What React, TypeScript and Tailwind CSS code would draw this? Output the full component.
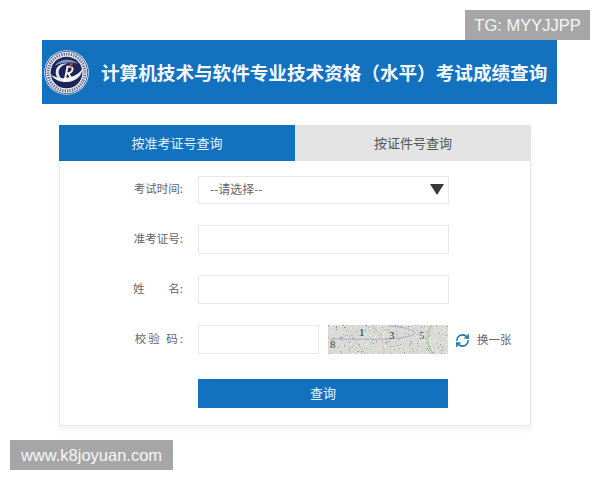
import { RefreshCw } from 'lucide-react';

const FONT = "font-['Noto_Sans_CJK_SC','Liberation_Sans',sans-serif]";

// speckle for the captcha background, fixed so every render is the same
const NOISE = Array.from({ length: 300 }, (_, i) => ({
  x: (i * 73 + (i * i) % 29) % 120,
  y: (i * 41 + (i * i) % 17) % 29,
  c: i % 4 === 0 ? '#8f948a' : i % 4 === 1 ? '#a9aca4' : '#f1f1ee',
}));

function Logo() {
  return (
    <svg width="45" height="45" viewBox="0 0 46 46" className="shrink-0">
      <circle cx="23" cy="23" r="22.8" fill="#eef0f6" />
      <circle cx="23" cy="23" r="21.6" fill="none" stroke="#2a3464" strokeWidth="0.8" />
      <circle cx="23" cy="23" r="18.8" fill="none" stroke="#5b6390" strokeWidth="3" strokeDasharray="1.3 1.2" />
      <circle cx="23" cy="23" r="16.2" fill="#1d2556" />
      <path d="M7 25c5 9 22 11 30 1 2-3 2-5 2-7-3 8-21 14-32 6z" fill="#f0f3fa" />
      <path d="M11 16c5-7 17-8 24-2-7-2-16-2-24 2z" fill="#7f92c4" />
      <path d="M24 14c-7-1-12 3-12 9 0 5 4 8 8 8-3-2-5-5-5-8 0-5 4-8 9-9z" fill="#e4e9f6" />
      <path d="M21 32l3-15M23 17h3q4 0 3 3.500t-6 3.500M25 24l4 7" fill="none" stroke="#ffffff" strokeWidth="1.9" />
      <path d="M26 12l1.500 2 2.500-.5-1.500 2.500.5 2-2.500-1z" fill="#d8353a" />
    </svg>
  );
}

function Captcha() {
  return (
    <div className="relative w-[120px] h-[29px] ml-[9px] bg-[#d6d6d0] overflow-hidden">
      <svg width="120" height="29" viewBox="0 0 120 29" className="absolute inset-0">
        <rect width="120" height="29" fill="#d9d9d5" />
        {NOISE.map((n, i) => (
          <rect key={i} x={n.x} y={n.y} width="1" height="1" fill={n.c} />
        ))}
        <path d="M2 14c30 0 60 2 80-3 12-3 0-9-22-10" fill="none" stroke="#9aa6d4" strokeWidth="0.8" />
        <path d="M24 8c4 10 9 16 14 21M44 0c8 8 12 18 12 29" fill="none" stroke="#d9b4aa" strokeWidth="0.8" />
        <path d="M104 0c-6 8-6 20 1 29" fill="none" stroke="#a8cc9a" strokeWidth="1.2" />
      </svg>
      <span className="absolute left-[2px] top-[12px] text-[11px] leading-[14px] font-['Liberation_Serif',serif] text-[#3d4a2c]">8</span>
      <span className="absolute left-[31px] top-[0px] text-[11px] leading-[14px] font-['Liberation_Serif',serif] text-[#14301f]">1</span>
      <span className="absolute left-[61px] top-[3px] text-[11px] leading-[14px] font-['Liberation_Serif',serif] text-[#2e3e38]">3</span>
      <span className="absolute left-[91px] top-[3px] text-[11px] leading-[14px] font-['Liberation_Serif',serif] text-[#40604a]">5</span>
    </div>
  );
}

function Row({ label, children }: { label: React.ReactNode; children: React.ReactNode }) {
  return (
    <div className="flex items-center h-[29px]">
      <div className="w-[138px] pr-[15px] pb-[2px] flex justify-end text-[11.5px] text-[#666]">{label}</div>
      {children}
    </div>
  );
}

export default function App() {
  return (
    <div className={`relative w-[600px] h-[480px] bg-white pt-[40px] overflow-hidden ${FONT}`}>
      {/* Banner */}
      <div className="ml-[42px] w-[515px] h-[64px] bg-[#1272bf] flex items-center pl-[2px]">
        <Logo />
        <h1 className="ml-[12px] text-[18.6px] font-bold text-[#f4f8fc] whitespace-nowrap">
          计算机技术与软件专业技术资格（水平）考试成绩查询
        </h1>
      </div>

      {/* Card */}
      <div className="ml-[59px] mt-[21px] w-[472px] h-[301px] bg-white border border-[#e6e6e6] shadow-[0_4px_6px_rgba(0,0,0,0.05)]">
        <div className="flex h-[36px] -mx-px -mt-px">
          <div className="w-[236px] bg-[#1272bf] text-[#e8f2fa] text-[13px] flex items-center justify-center">按准考证号查询</div>
          <div className="flex-1 bg-[#e3e3e3] text-[#555] text-[13px] flex items-center justify-center">按证件号查询</div>
        </div>

        <div className="flex flex-col gap-[21px] pt-[14px]">
          <Row label={<span>考试时间:</span>}>
            <div className="w-[251px] h-[28px] border border-[#e8e8e8] flex items-center justify-between pl-[11px] pr-[4px] text-[12px] text-[#666]">
              <span className="pb-[2px]">--请选择--</span>
              <span className="w-0 h-0 border-l-[7.5px] border-r-[7.5px] border-t-[11px] border-l-transparent border-r-transparent border-t-[#3a3a3a]" />
            </div>
          </Row>
          <Row label={<span>准考证号:</span>}>
            <div className="w-[251px] h-[29px] border border-[#e8e8e8]" />
          </Row>
          <Row label={<span className="w-[50px] flex justify-between"><span>姓</span><span>名:</span></span>}>
            <div className="w-[251px] h-[29px] border border-[#e8e8e8]" />
          </Row>
          <Row label={<span className="tracking-[2px] -mr-[2px]">校验 码:</span>}>
            <div className="w-[121px] h-[29px] border border-[#e8e8e8]" />
            <Captcha />
            <RefreshCw size={15} strokeWidth={2.5} className="ml-[7px] mt-[1px] text-[#1b78a8]" />
            <span className="ml-[7px] text-[11.5px] text-[#666] whitespace-nowrap">换一张</span>
          </Row>
          <div className="pl-[138px] pt-[4px]">
            <div className="w-[250px] h-[29px] bg-[#1272bf] text-[#e8f2fa] text-[13px] pb-[2px] flex items-center justify-center">查询</div>
          </div>
        </div>
      </div>

      {/* Watermarks */}
      <div className="absolute left-[465px] top-[10px] w-[125px] h-[30px] bg-[#a6a6a6] text-[#f6f6f6] text-[16.5px] flex items-center justify-center font-['Liberation_Sans',sans-serif]">TG: MYYJJPP</div>
      <div className="absolute left-[10px] top-[440px] w-[163px] h-[30px] bg-[#a6a6a6] text-[#f6f6f6] text-[16.5px] flex items-center justify-center font-['Liberation_Sans',sans-serif]">www.k8joyuan.com</div>
    </div>
  );
}
